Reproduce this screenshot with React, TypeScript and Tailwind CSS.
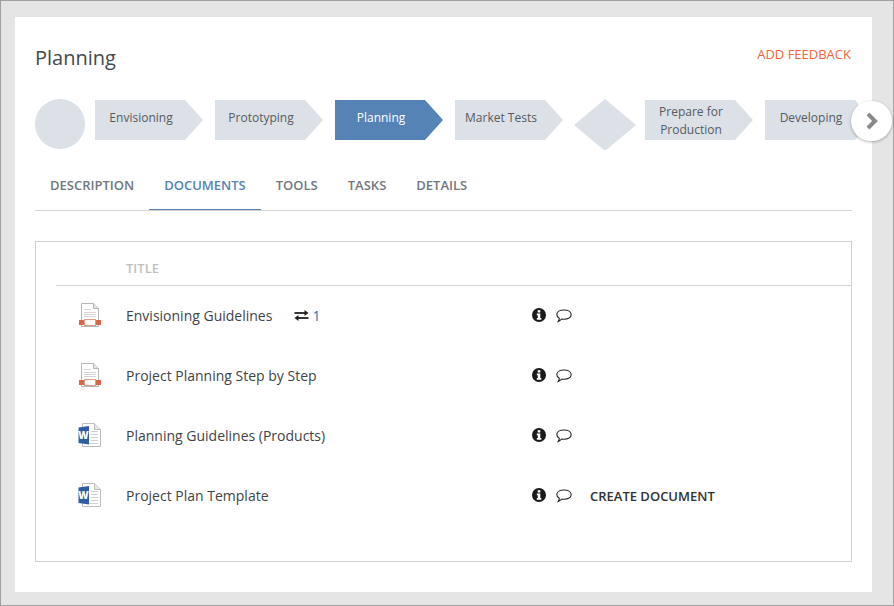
import React from "react";

const arrow = "flex h-10 w-[108px] shrink-0 items-center justify-center pr-[16px] text-center text-[12px] leading-[18px] [clip-path:polygon(0_0,90px_0,108px_50%,90px_100%,0_100%)]";

function Step({ label, active, double }: { label: React.ReactNode; active?: boolean; double?: boolean }) {
  return (
    <div className={`${arrow} ${active ? "bg-[#5583b6] text-white" : "bg-[#dce0e7] text-[#555b61]"} ${double ? "pt-[1px]" : "pb-[5px]"}`}>
      <span>{label}</span>
    </div>
  );
}

function PptIcon() {
  return (
    <svg width="24" height="26" viewBox="0 0 24 26" className="shrink-0">
      <path d="M3.5 1.5H15.5L20.5 6.5V24.5H3.5Z" fill="#fff" stroke="#b5b5b5" strokeWidth="1" />
      <path d="M15.5 1.5V6.5H20.5" fill="#e6e6e6" stroke="#b5b5b5" strokeWidth="1" />
      <path d="M6 7.5H13M6 10.5H18M6 12.5H18M6 14.5H18" stroke="#d4d4d4" strokeWidth="1" />
      <rect x="1" y="18" width="5" height="5" fill="#dc6544" />
      <rect x="18" y="18" width="5" height="5" fill="#dc6544" />
      <rect x="6.5" y="17.5" width="11" height="6" fill="#fff" stroke="#e59a86" strokeWidth="1" />
    </svg>
  );
}

function WordIcon() {
  return (
    <svg width="24" height="26" viewBox="0 0 24 26" className="shrink-0">
      <path d="M4.5 1.5H16.5L22.5 7.5V24.5H4.5Z" fill="#fff" stroke="#bdbdbd" strokeWidth="1" />
      <path d="M16.5 1.5V7.5H22.5" fill="#e6e6e6" stroke="#bdbdbd" strokeWidth="1" />
      <path d="M13 9.5H20M13 12.5H20M13 15.5H20M13 18.5H20M8 21.5H20" stroke="#d0d0d0" strokeWidth="1" />
      <path d="M0.5 5.5L11 4V22.5L0.5 21Z" fill="#2f5ea6" />
      <text x="5.5" y="17" textAnchor="middle" fontFamily="Open Sans" fontWeight="800" fontSize="10" fill="#fff">W</text>
    </svg>
  );
}

function InfoIcon() {
  return (
    <svg width="14" height="14" viewBox="0 0 14 14" className="shrink-0">
      <circle cx="7" cy="7" r="7" fill="#1b1b1b" />
      <rect x="5.7" y="2.2" width="2.6" height="2.3" fill="#fff" />
      <path d="M4.8 5.5H8.3V10H9.3V11.7H4.8V10H5.8V7.2H4.8Z" fill="#fff" />
    </svg>
  );
}

function BubbleIcon() {
  return (
    <svg width="16" height="14" viewBox="0 0 16 14" className="ml-[10px] mt-[2px] shrink-0">
      <path d="M8 1C11.9 1 15.2 2.8 15.2 5.6C15.2 8.4 11.9 10.2 8 10.2C7.2 10.2 6.4 10.1 5.7 10C4.8 11 3.6 11.9 2.3 12.4C2.9 11.4 3.3 10.4 3.3 9.3C1.8 8.5 0.8 7.2 0.8 5.6C0.8 2.8 4.1 1 8 1Z" fill="none" stroke="#222" strokeWidth="1.1" />
    </svg>
  );
}

function ExchangeIcon() {
  return (
    <svg width="15" height="11" viewBox="0 0 15 11" className="shrink-0">
      <path d="M0.5 3H11" stroke="#1f1f1f" strokeWidth="1.8" />
      <path d="M10.5 0L14.5 3L10.5 6Z" fill="#1f1f1f" />
      <path d="M4 8H14.5" stroke="#1f1f1f" strokeWidth="1.8" />
      <path d="M4.5 5L0.5 8L4.5 11Z" fill="#1f1f1f" />
    </svg>
  );
}

function Row({ icon, title, count, action }: { icon: React.ReactNode; title: string; count?: boolean; action?: boolean }) {
  return (
    <div className="flex h-[60px] items-center">
      <div className="flex w-[70px] pl-[22px]">{icon}</div>
      <div className="flex w-[406px] items-center text-[14px] text-[#3f4448]">
        <span>{title}</span>
        {count && (
          <span className="ml-[22px] flex items-center gap-[3px] text-[#1f73b7]">
            <ExchangeIcon />1
          </span>
        )}
      </div>
      <InfoIcon />
      <BubbleIcon />
      {action && <span className="ml-[18px] mt-[3px] text-[13px] font-semibold text-[#2e3236]">CREATE DOCUMENT</span>}
    </div>
  );
}

export default function App() {
  return (
    <div className="h-[606px] w-[894px] overflow-hidden border border-[#a0a0a0] bg-[#e5e5e5] pl-[14px] pr-[21px] pt-[16px] font-['Open_Sans',sans-serif]">
      <div className="h-[575px] w-[857px] bg-white px-[20px]">
        <div className="flex h-[81px] items-start justify-between">
          <h1 className="pt-[25px] text-[20px] leading-[32px] text-[#44494d]">Planning</h1>
          <a className="mr-[1px] pt-[28px] text-[13px] leading-[18px] text-[#f4633c]">ADD FEEDBACK</a>
        </div>
        <div className="relative flex h-[52px] w-[857px] items-center">
          <div className="h-[50px] w-[50px] shrink-0 rounded-full bg-[#dce0e7]" />
          <div className="ml-[10px] flex h-[52px] w-[763px] items-start overflow-hidden pt-[2px]">
            <div className="flex items-center gap-[12px]">
              <Step label="Envisioning" />
              <Step label="Prototyping" />
              <Step label="Planning" active />
              <Step label="Market Tests" />
            </div>
            <div className="ml-[11px] h-[52px] w-[62px] shrink-0 -translate-y-[1px] bg-[#dce0e7] [clip-path:polygon(50%_0,100%_50%,50%_100%,0_50%)]" />
            <div className="ml-[9px] flex gap-[12px]">
              <Step double label={<>Prepare for<br />Production</>} />
              <Step label="Developing" />
            </div>
          </div>
          <div className="absolute left-[816px] top-[3px] flex h-[40px] w-[41px] items-center justify-center rounded-full bg-white shadow-[0_1px_3px_rgba(0,0,0,0.3)]">
            <svg width="14" height="18" viewBox="0 0 14 18">
              <path d="M3 2L10 9L3 16" fill="none" stroke="#8a8a8a" strokeWidth="4" />
            </svg>
          </div>
        </div>
        <div className="mt-[19px] flex h-[42px] w-[817px] items-start border-b border-[#d4d4d4] text-[13px] font-semibold text-[#71777d]">
          <div className="px-[15px] pt-[7px]">DESCRIPTION</div>
          <div className="h-[41px] border-b border-[#5583b6] px-[15px] pt-[7px] text-[#5583b6]">DOCUMENTS</div>
          <div className="px-[15px] pt-[7px]">TOOLS</div>
          <div className="px-[15px] pt-[7px]">TASKS</div>
          <div className="px-[15px] pt-[7px]">DETAILS</div>
        </div>
        <div className="mt-[30px] h-[321px] w-[817px] border border-[#d0d0d0] pl-[20px]">
          <div className="-mb-px flex h-[44px] items-center border-b border-[#d4d4d4] pl-[70px] pt-[10px] text-[13px] font-semibold text-[#c0c0c0]">TITLE</div>
          <Row icon={<PptIcon />} title="Envisioning Guidelines" count />
          <Row icon={<PptIcon />} title="Project Planning Step by Step" />
          <Row icon={<WordIcon />} title="Planning Guidelines (Products)" />
          <Row icon={<WordIcon />} title="Project Plan Template" action />
        </div>
      </div>
    </div>
  );
}
